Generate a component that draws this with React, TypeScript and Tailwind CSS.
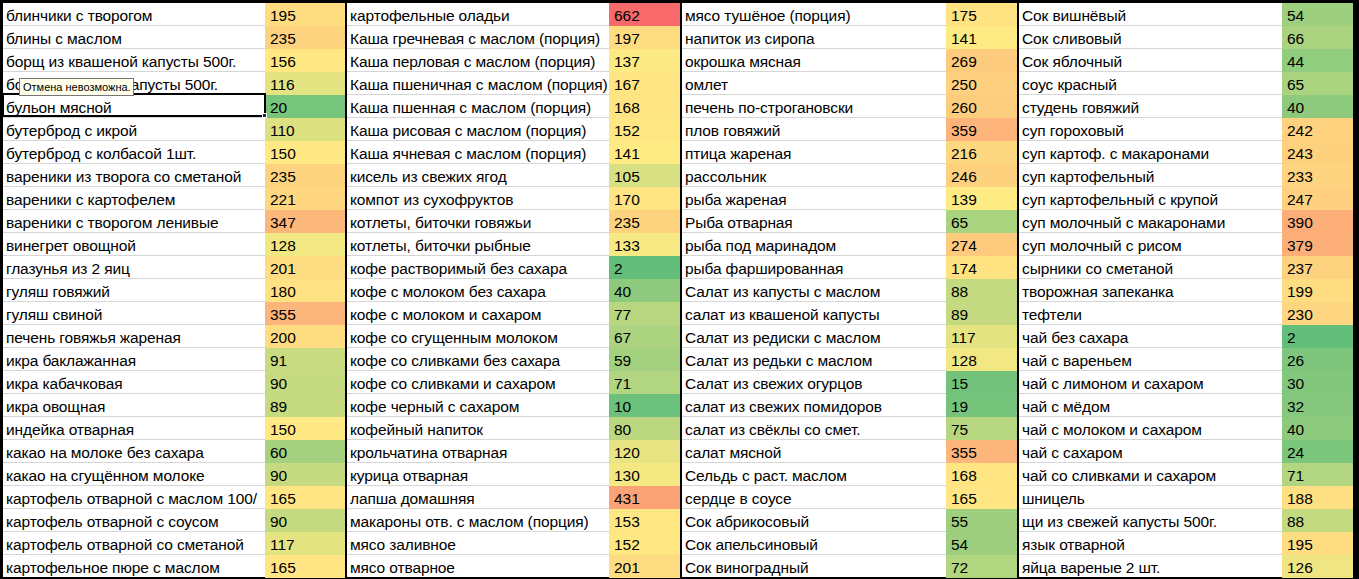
import React from "react";

type Row = [string, number];

const g1: Row[] = [
  ["блинчики с творогом", 195],
  ["блины с маслом", 235],
  ["борщ из квашеной капусты 500г.", 156],
  ["борщ из свежей капусты 500г.", 116],
  ["бульон мясной", 20],
  ["бутерброд с икрой", 110],
  ["бутерброд с колбасой 1шт.", 150],
  ["вареники из творога со сметаной", 235],
  ["вареники с картофелем", 221],
  ["вареники с творогом ленивые", 347],
  ["винегрет овощной", 128],
  ["глазунья из 2 яиц", 201],
  ["гуляш говяжий", 180],
  ["гуляш свиной", 355],
  ["печень говяжья жареная", 200],
  ["икра баклажанная", 91],
  ["икра кабачковая", 90],
  ["икра овощная", 89],
  ["индейка отварная", 150],
  ["какао на молоке без сахара", 60],
  ["какао на сгущённом молоке", 90],
  ["картофель отварной с маслом 100/", 165],
  ["картофель отварной с соусом", 90],
  ["картофель отварной со сметаной", 117],
  ["картофельное пюре с маслом", 165],
];

const g2: Row[] = [
  ["картофельные оладьи", 662],
  ["Каша гречневая с маслом (порция)", 197],
  ["Каша перловая с маслом (порция)", 137],
  ["Каша пшеничная с маслом (порция)", 167],
  ["Каша пшенная с маслом (порция)", 168],
  ["Каша рисовая с маслом (порция)", 152],
  ["Каша ячневая с маслом (порция)", 141],
  ["кисель из свежих ягод", 105],
  ["компот из сухофруктов", 170],
  ["котлеты, биточки говяжьи", 235],
  ["котлеты, биточки рыбные", 133],
  ["кофе растворимый без сахара", 2],
  ["кофе с молоком без сахара", 40],
  ["кофе с молоком и сахаром", 77],
  ["кофе со сгущенным молоком", 67],
  ["кофе со сливками без сахара", 59],
  ["кофе со сливками и сахаром", 71],
  ["кофе черный с сахаром", 10],
  ["кофейный напиток", 80],
  ["крольчатина отварная", 120],
  ["курица отварная", 130],
  ["лапша домашняя", 431],
  ["макароны отв. с маслом (порция)", 153],
  ["мясо заливное", 152],
  ["мясо отварное", 201],
];

const g3: Row[] = [
  ["мясо тушёное (порция)", 175],
  ["напиток из сиропа", 141],
  ["окрошка мясная", 269],
  ["омлет", 250],
  ["печень по-строгановски", 260],
  ["плов говяжий", 359],
  ["птица жареная", 216],
  ["рассольник", 246],
  ["рыба жареная", 139],
  ["Рыба отварная", 65],
  ["рыба под маринадом", 274],
  ["рыба фаршированная", 174],
  ["Салат из капусты с маслом", 88],
  ["салат из квашеной капусты", 89],
  ["Салат из редиски с маслом", 117],
  ["Салат из редьки с маслом", 128],
  ["Салат из свежих огурцов", 15],
  ["салат из свежих помидоров", 19],
  ["салат из свёклы со смет.", 75],
  ["салат мясной", 355],
  ["Сельдь с раст. маслом", 168],
  ["сердце в соусе", 165],
  ["Сок абрикосовый", 55],
  ["Сок апельсиновый", 54],
  ["Сок виноградный", 72],
];

const g4: Row[] = [
  ["Сок вишнёвый", 54],
  ["Сок сливовый", 66],
  ["Сок яблочный", 44],
  ["соус красный", 65],
  ["студень говяжий", 40],
  ["суп гороховый", 242],
  ["суп картоф. с макаронами", 243],
  ["суп картофельный", 233],
  ["суп картофельный с крупой", 247],
  ["суп молочный с макаронами", 390],
  ["суп молочный с рисом", 379],
  ["сырники со сметаной", 237],
  ["творожная запеканка", 199],
  ["тефтели", 230],
  ["чай без сахара", 2],
  ["чай с вареньем", 26],
  ["чай с лимоном и сахаром", 30],
  ["чай с мёдом", 32],
  ["чай с молоком и сахаром", 40],
  ["чай с сахаром", 24],
  ["чай со сливками и сахаром", 71],
  ["шницель", 188],
  ["щи из свежей капусты 500г.", 88],
  ["язык отварной", 195],
  ["яйца вареные 2 шт.", 126],
];

const MIN = 2;
const MID = 140;
const MAX = 662;
const GREEN = [99, 190, 123];
const YELLOW = [255, 235, 132];
const RED = [248, 105, 107];

function scale(v: number): string {
  let a: number[], b: number[], t: number;
  if (v <= MID) {
    a = GREEN;
    b = YELLOW;
    t = (v - MIN) / (MID - MIN);
  } else {
    a = YELLOW;
    b = RED;
    t = (v - MID) / (MAX - MID);
  }
  t = Math.max(0, Math.min(1, t));
  const c = a.map((x, i) => Math.round(x + (b[i] - x) * t));
  return `rgb(${c[0]},${c[1]},${c[2]})`;
}

type Group = {
  rows: Row[];
  nameCls: string;
  valCls: string;
  sep: string;
};

const groups: Group[] = [
  { rows: g1, nameCls: "w-[262px]", valCls: "w-[80px]", sep: "" },
  { rows: g2, nameCls: "w-[262px]", valCls: "w-[71px]", sep: "border-l-2 border-black" },
  { rows: g3, nameCls: "w-[264px]", valCls: "w-[71px]", sep: "border-l-2 border-black" },
  { rows: g4, nameCls: "w-[263px]", valCls: "w-[71px]", sep: "border-l-2 border-black" },
];

export default function App() {
  return (
    <div
      className="relative w-[1359px] h-[579px] overflow-hidden bg-white text-black"
      style={{ fontFamily: '"Liberation Sans", Arial, sans-serif' }}
    >
      <div className="flex w-[1359px] h-[579px] border-t-[3px] border-l-[3px] border-r-[6px] border-b border-black text-[15.5px] leading-[18px]">
        {groups.map((g, gi) => (
          <div key={gi} className={`flex flex-col ${g.sep}`}>
            {g.rows.map(([name, v], ri) => {
              const last = ri === g.rows.length - 1;
              const selected = gi === 0 && ri === 4;
              return (
                <div key={ri} className="flex h-[23px] shrink-0">
                  <div
                    className={`relative ${g.nameCls} h-[23px] flex items-end pl-[3px] whitespace-nowrap tracking-[-0.12px] border-b ${
                      last ? "border-black" : "border-[#d6d6d6]"
                    }`}
                  >
                    <span className="block overflow-hidden w-full">{name}</span>
                    {selected && (
                      <div className="absolute -top-[2px] -left-[1px] -right-[1px] bottom-0 border-2 border-black">
                        <div className="absolute -bottom-[3px] -right-[3px] w-[5px] h-[5px] bg-[#222244] border border-white" />
                      </div>
                    )}
                  </div>
                  <div
                    className={`${g.valCls} h-[23px] flex items-end pl-[5px] pb-[1px]`}
                    style={{ backgroundColor: scale(v) }}
                  >
                    {v}
                  </div>
                </div>
              );
            })}
          </div>
        ))}
      </div>
      <div className="absolute left-[19px] top-[78px] w-[115px] h-[18px] bg-[#ffffec] border border-[#767676] flex items-center pl-[3px] text-[11px] leading-[14px] whitespace-nowrap">
        Отмена невозможна.
      </div>
    </div>
  );
}
